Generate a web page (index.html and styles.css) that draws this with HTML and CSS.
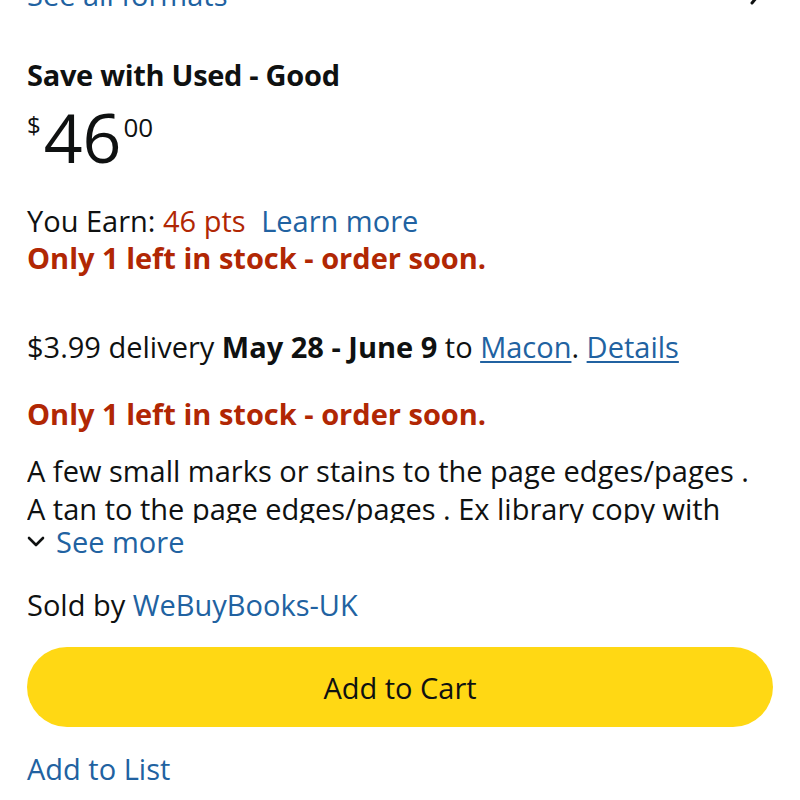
FILE: index.html
```html
<!DOCTYPE html>
<html>
<head>
<meta charset="utf-8">
<link rel="stylesheet" href="styles.css">
</head>
<body>
<div class="page">
  <div class="formats">
    <a class="link" href="#">See all formats</a>
    <svg class="chev-right" width="16" height="28" viewBox="0 0 16 28"><path d="M3 2 L13 14 L3 26" fill="none" stroke="#0F1111" stroke-width="3" stroke-linecap="round" stroke-linejoin="round"/></svg>
  </div>
  <h2 class="title">Save with Used - Good</h2>
  <div class="price">
    <span class="sym">$</span><span class="whole">46</span><span class="frac">00</span>
  </div>
  <p class="line earn">You Earn: <span class="red">46 pts</span> <a class="link learn" href="#">Learn more</a></p>
  <p class="line stock">Only 1 left in stock - order soon.</p>
  <p class="line delivery">$3.99 delivery <b>May 28 - June 9</b> to <a class="link u" href="#">Macon</a>. <a class="link u" href="#">Details</a></p>
  <p class="line stock stock2">Only 1 left in stock - order soon.</p>
  <div class="desc">A few small marks or stains to the page edges/pages . A tan to the page edges/pages . Ex library copy with usual stamps and stickers.</div>
  <div class="seemore">
    <svg width="18" height="12" viewBox="0 0 18 12"><path d="M2 2 L9 9 L16 2" fill="none" stroke="#0F1111" stroke-width="2.6" stroke-linecap="round" stroke-linejoin="round"/></svg>
    <a class="link" href="#">See more</a>
  </div>
  <p class="line sold">Sold by <a class="link" href="#">WeBuyBooks-UK</a></p>
  <button class="cart">Add to Cart</button>
  <a class="link addlist" href="#">Add to List</a>
</div>
</body>
</html>
```
FILE: styles.css
```css
html, body {
  margin: 0;
  padding: 0;
  background: #ffffff;
  overflow: hidden;
}
body {
  font-family: "Open Sans", "Noto Sans", sans-serif;
  color: #0F1111;
  font-size: 29px;
}
.page {
  padding: 0 27px;
  height: 800px;
  overflow: hidden;
}
.link {
  color: #2162A1;
  text-decoration: none;
}
.link.u {
  text-decoration: underline;
  text-underline-offset: 3px;
  text-decoration-thickness: 1.5px;
}
.red { color: #B12704; }
.formats {
  display: flex;
  justify-content: space-between;
  align-items: center;
  margin-top: -24px;
  height: 37px;
  line-height: 37px;
  padding-right: 8px;
}
.chev-right { margin-top: -8px; }
.title {
  margin: 43px 0 0;
  font-size: 29px;
  font-weight: 700;
  line-height: 37px;
  letter-spacing: -0.3px;
}
.price {
  display: flex;
  align-items: flex-start;
  margin-top: 10px;
  height: 68px;
}
.sym {
  font-size: 24px;
  line-height: 24px;
  margin-top: 10px;
  margin-right: 3px;
}
.whole {
  font-size: 68px;
  line-height: 68px;
}
.frac {
  font-size: 26px;
  line-height: 26px;
  margin-top: 11px;
  margin-left: 2px;
}
.line {
  margin: 0;
  line-height: 37px;
}
.earn { margin-top: 31px; }
.learn { margin-left: 8px; }
.stock {
  color: #B12704;
  font-weight: 700;
}
.delivery { margin-top: 52px; }
.delivery b { font-weight: 700; }
.stock2 { margin-top: 30px; }
.desc {
  margin-top: 20px;
  line-height: 38px;
  height: 71px;
  overflow: hidden;
}
.seemore {
  display: flex;
  align-items: center;
  gap: 11px;
  line-height: 37px;
  margin-top: 0;
}
.sold { margin-top: 26px; }
.cart {
  display: block;
  width: 100%;
  height: 80px;
  margin-top: 24px;
  border: none;
  border-radius: 40px;
  background: #FFD814;
  color: #0F1111;
  font-family: inherit;
  font-size: 29px;
}
.addlist {
  display: block;
  margin-top: 23px;
  line-height: 37px;
}
```
